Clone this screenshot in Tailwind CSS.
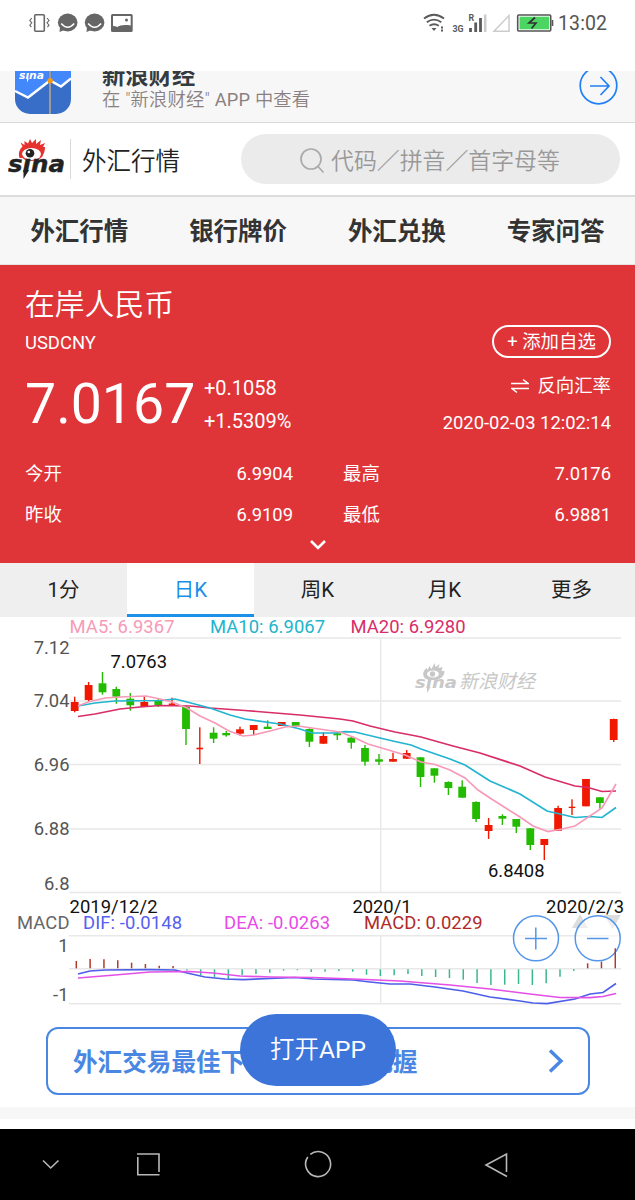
<!DOCTYPE html>
<html lang="zh-CN">
<head>
  <meta charset="UTF-8" />
  <meta name="viewport" content="width=device-width, initial-scale=1.0" />
  <title>外汇行情 - 在岸人民币</title>
  <script src="https://cdn.jsdelivr.net/npm/@tailwindcss/browser@4"></script>
</head>
<body class="w-[635px] h-[1200px] overflow-hidden bg-white font-[Roboto,'Noto_Sans_CJK_SC',sans-serif] text-[#333]">

  <!-- Status bar -->
  <div class="h-[71px] flex justify-between">
    <svg class="ml-7 mt-3 w-[110px] h-[22px]" viewBox="28 12 110 22" fill="none">
      <rect x="34.7" y="14.8" width="9.6" height="16.4" rx="1" stroke="#666" stroke-width="1.6" />
      <path d="M31.8 18l-2 2.5 2 2.3-2 2.4 1.6 2M47 18l2 2.5-2 2.3 2 2.4-1.6 2" stroke="#666" stroke-width="1.1" />
      <g fill="#666">
        <ellipse cx="67.7" cy="22.5" rx="9.8" ry="8.9" />
        <path d="M60 27l-.5 5 5-2z" />
        <ellipse cx="94.6" cy="22.5" rx="9.8" ry="8.9" />
        <path d="M87 27l-.5 5 5-2z" />
        <rect x="111" y="14" width="21.7" height="18" rx="1.5" />
      </g>
      <path d="M61.2 23.5q6.5 7.5 13 0M88.1 23.5q6.5 7.5 13 0" stroke="#fff" stroke-width="1.4" />
      <path d="M113 16h17.7v9.5c-7-1-11 0-13.5 1.5-1.5-.8-3-1-4.2-1z" fill="#fff" />
      <circle cx="126.5" cy="20" r="1.5" fill="#666" />
    </svg>
    <svg class="mr-6 mt-3 w-[190px] h-[24px]" viewBox="421 12 190 24" fill="none">
      <path d="M424 18.5q10-7.5 20 0M426.800 22.2q7.200-5.200 14.500 0M429.500 25.8q4.500-3.200 9.300 0" stroke="#5a5a5a" stroke-width="1.9" />
      <path d="M431.5 28h5l-2.500 3z" fill="#5a5a5a" />
      <path d="M442 26.500v2M442 29.500v2" stroke="#5a5a5a" stroke-width="2" />
      <text x="452.5" y="32" font-size="8.8" font-weight="700" fill="#5a5a5a">3G</text>
      <text x="468.5" y="21" font-size="8.8" font-weight="700" fill="#5a5a5a">R</text>
      <path d="M470.500 28v4M475.700 22.500v9.500M480.500 18v14" stroke="#5a5a5a" stroke-width="2.8" />
      <path d="M485.200 14.500v17.500" stroke="#ccc" stroke-width="2.6" />
      <path d="M509 15.500v15.700h-15z" stroke="#ccc" stroke-width="1.5" />
      <rect x="517.7" y="15" width="33" height="16" rx="1" stroke="#555" stroke-width="1.6" />
      <rect x="519.5" y="16.7" width="29.5" height="12.6" fill="#4bd663" />
      <path d="M552.500 20v6" stroke="#555" stroke-width="1.6" />
      <path d="M535 17.500l-6 5.500h7l-4.500 5.500" stroke="#333" stroke-width="1.7" />
      <text x="558" y="29.5" font-size="19.5" textLength="49" fill="#555">13:02</text>
    </svg>
  </div>

  <!-- App banner, scrolled partly out of view -->
  <div class="h-[52px] overflow-hidden bg-[#f7f7f7] border-b border-[#d9d9d9] flex items-start">
    <svg class="ml-[15px] w-14 h-[43px]" viewBox="15 71 56 43" fill="none">
      <path d="M15 71h56v28a15 15 0 0 1-15 15h-26a15 15 0 0 1-15-15z" fill="#386ec8" />
      <path d="M15 71h56v7l-10 8-11-6-22 17-13-6z" fill="#4388fa" />
      <path d="M15 91l13 6.500 22-17 11 6 10-8" stroke="#fff" stroke-width="2.4" />
      <path d="M50 71v43" stroke="#667" stroke-width="2.4" />
      <path d="M50 71v43" stroke="#ccc" stroke-width="1" />
      <circle cx="50.2" cy="80.7" r="2.7" fill="#f59a18" />
      <text x="19" y="79" font-size="11" font-weight="700" font-style="italic" font-family="DejaVu Sans" textLength="25" lengthAdjust="spacingAndGlyphs" fill="#fff">sına</text>
      <path d="M27 78.500h2l-2 4z" fill="#fff" />
    </svg>
    <div class="ml-[31px] -mt-[9px]">
      <div class="text-[23.3px] leading-[28px] font-bold text-[#333b40]">新浪财经</div>
      <div class="mt-[-2px] text-[18.3px] leading-[24px] font-[350] tracking-[.2px] text-[#8a8080]">在 "新浪财经" <span class="font-normal">APP</span> 中查看</div>
    </div>
    <svg class="ml-auto mr-[17px] w-10 h-[35px]" viewBox="578 71 40 35" fill="none" stroke="#2080f5" stroke-width="1.7">
      <circle cx="598.5" cy="85.5" r="18.3" />
      <path d="M590 86h19M600.500 77l8.500 9-8.500 9" />
    </svg>
  </div>

  <!-- Site header -->
  <header class="h-[74px] flex items-center border-b-2 border-[#dcdcdc]">
    <svg class="ml-2 w-[58px] h-[44px]" viewBox="8 138 58 44" fill="none">
      <path d="M19.500 159c-1.500-5 0-8.500 3-11.500l-2-4 4 2.500 0-4 3.500 2.500 2-4.500 2 4 4-4 0 5 5-4-1 5 5-2-2 4 2 0c0 4-1 7-3.500 10z" fill="#e6322f" />
      <ellipse cx="31.5" cy="155" rx="9.5" ry="6" fill="#fff" />
      <path d="M21.500 156q1.500 5 10 5.500 8-.500 11-5" stroke="#e6322f" stroke-width="1.2" />
      <circle cx="30" cy="154.2" r="4.300" fill="#222" />
      <circle cx="28.8" cy="153" r="1.3" fill="#fff" />
      <text x="8" y="172.500" font-size="22.5" font-weight="700" font-style="italic" font-family="DejaVu Sans" textLength="57" lengthAdjust="spacingAndGlyphs" stroke="#222" stroke-width=".4" fill="#222">sına</text>
      <path d="M23.500 171h5.500l-5.500 9z" fill="#222" />
    </svg>
    <div class="ml-1 w-px h-10 bg-[#d8d8d8]"></div>
    <h1 class="ml-[11px] mt-[5px] text-[24.5px] leading-8 font-[350] text-[#222]">外汇行情</h1>
    <div class="ml-auto mr-[15px] w-[379px] h-[50px] rounded-full bg-[#ebebeb] flex items-center pl-[58px] text-[#999]">
      <svg class="mt-1 w-[28px] h-[28px]" viewBox="0 0 28 28" fill="none" stroke="#aaa" stroke-width="1.7">
        <circle cx="12" cy="12" r="10" />
        <path d="M19 19.500l5.500 6" />
      </svg>
      <span class="ml-1 mt-[5px] text-[22.9px] leading-8 font-[350]">代码／拼音／首字母等</span>
    </div>
  </header>

  <!-- Navigation -->
  <nav class="h-[68px] pt-[3px] grid grid-cols-4 items-center text-center bg-[#f7f7f7] border-b border-[#e4e4e4] text-[24.5px] leading-8 font-bold text-[#333]">
    <a>外汇行情</a>
    <a>银行牌价</a>
    <a>外汇兑换</a>
    <a>专家问答</a>
  </nav>

  <!-- Quote panel -->
  <section class="h-[298px] bg-[#df3539] text-white px-6 pt-[21px] text-[18.4px]">
    <h2 class="ml-px text-[29.8px] leading-[38px] font-[350]">在岸人民币</h2>
    <div class="flex justify-between">
      <div>
        <div class="mt-[7px] ml-px text-[18.4px] leading-6">USDCNY</div>
        <div class="flex mt-[17px]">
          <div class="w-[179px] ml-px text-[55.4px] leading-[66px]">7.0167</div>
          <div class="text-[20px] leading-[33px]">
            <div>+0.1058</div>
            <div>+1.5309%</div>
          </div>
        </div>
      </div>
      <div class="flex flex-col items-end">
        <button class="mt-px w-[119px] h-[33px] border-2 border-white rounded-full text-[18.4px] leading-7">+ 添加自选</button>
        <div class="mt-[14px] h-7 flex items-center gap-2">
          <svg class="w-[18px] h-4" viewBox="0 0 18 16" fill="none" stroke="#fff" stroke-width="1.5">
            <path d="M0 5.500h17l-5-4M18 10.500h-17l5 4" />
          </svg>
          <span>反向汇率</span>
        </div>
        <div class="mt-[11px] leading-6">2020-02-03 12:02:14</div>
      </div>
    </div>
    <div class="mt-[15px] grid grid-cols-[269px_268px] gap-x-[50px] leading-[41px]">
      <div class="flex justify-between"><span class="ml-px">今开</span><span>6.9904</span></div>
      <div class="flex justify-between"><span>最高</span><span>7.0176</span></div>
      <div class="flex justify-between"><span class="ml-px">昨收</span><span>6.9109</span></div>
      <div class="flex justify-between"><span>最低</span><span>6.9881</span></div>
    </div>
    <svg class="mx-auto mt-1 w-4 h-[11px]" viewBox="0 0 16 11" fill="none" stroke="#fff" stroke-width="2.6">
      <path d="M1 2l7 7 7-7" />
    </svg>
  </section>

  <!-- Period tabs -->
  <div class="h-[54px] grid grid-cols-5 text-center bg-[#efefef] text-[20.5px] leading-[51px] text-[#222]">
    <div class="pt-[2px]">1分</div>
    <div class="pt-[2px] relative bg-white text-[#1a90e8]">日K<span class="absolute inset-x-0 bottom-0 h-[3px] bg-[#1a90e8]"></span></div>
    <div class="pt-[2px]">周K</div>
    <div class="pt-[2px]">月K</div>
    <div class="pt-[2px]">更多</div>
  </div>

  <!-- K-line and MACD charts -->
  <svg class="block w-[635px] h-[410px]" viewBox="0 617 635 410" fill="none" font-size="18.4">
    <path d="M69 638h552M69 701h552M69 764.5h552M69 829h552M69 892.5h552M380.7 638v254.5M69 935.7h552M69 968.7h552M69 1003.7h552M380.7 936v67.5" stroke="#e8e8e8" stroke-width="1.4" />

    <g fill="#c8c8c8">
      <path d="M423.5 676c-1-4 1-6 3-8l1 2 2-4 2 3 3-6 1 4 4-3-1 4 4-1-1 4 3 0c0 6-5 9-11 9s-9-1-10-4z" />
      <ellipse cx="433" cy="674" rx="6" ry="3.5" fill="#fff" />
      <circle cx="432.5" cy="674" r="2.7" />
      <text x="415" y="687.5" font-size="16.5" font-weight="700" font-style="italic" font-family="DejaVu Sans" textLength="42" lengthAdjust="spacingAndGlyphs">sına</text>
      <path d="M427 687h3.500l-3.500 6z" />
      <text x="459" y="687.5" font-size="19" font-style="italic">新浪财经</text>
    </g>

    <g id="candles"></g>
    <path d="M78 716.5L95 714L110 711L120 709L140 707L160 705.5L190 706L210 708L245 710.5L300 715L340 719L353 721L370 726L395 732L411 735L421 737L453 746L480 753L520 766L545 777L575 786L588 787.5L602 791.5L616 791" stroke="#d82d68" stroke-width="1.7" />
    <path d="M78 706L95 703L115 701L160 700.5L175 699L187 702L210 708L230 715L245 719L280 724L300 729L312 733L335 733L345 731.7L355 732L380 738L395 741.5L411 745L421 749L450 759L465 765L490 781L520 794L547 811L575 817.5L590 816.5L602 817.5L616 807.5" stroke="#22b4d0" stroke-width="1.7" />
    <path d="M78 706L88 702L105 698L120 697L146 696L160 699L172 702L187 708L200 716L215 723L229 731L243 736L254 735L270 731L285 727L298 726L312 728L340 732L353 737L368 744L385 749L405 755L421 762L435 764.5L450 770L465 778L478 790L490 798L520 817L533 826L548 831.5L562 829L575 826L602 808L616 784" stroke="#f79ab8" stroke-width="1.7" />

    <text x="69.5" y="632.5" textLength="105" fill="#f79ab8">MA5: 6.9367</text>
    <text x="210" y="632.5" textLength="115" fill="#22b4cc">MA10: 6.9067</text>
    <text x="350.5" y="632.5" textLength="115" fill="#d82d68">MA20: 6.9280</text>

    <g fill="#555" text-anchor="end">
      <text x="69.5" y="653.5">7.12</text>
      <text x="69.5" y="706.5">7.04</text>
      <text x="69.5" y="771">6.96</text>
      <text x="69.5" y="835">6.88</text>
      <text x="69.5" y="890">6.8</text>
      <text x="68.5" y="951.5">1</text>
      <text x="68.5" y="1001">-1</text>
    </g>
    <g fill="#111">
      <text x="110.5" y="668">7.0763</text>
      <text x="488" y="877">6.8408</text>
      <text x="69.5" y="913" textLength="88">2019/12/2</text>
      <text x="352.5" y="913" textLength="59">2020/1</text>
      <text x="546" y="913" textLength="78">2020/2/3</text>
    </g>

    <text x="17" y="929" textLength="52.5" fill="#666">MACD</text>
    <text x="83" y="929" textLength="99" fill="#5560f0">DIF: -0.0148</text>
    <text x="224" y="929" textLength="106" fill="#e84ae8">DEA: -0.0263</text>
    <text x="364" y="929" textLength="118.5" fill="#b02a2a">MACD: 0.0229</text>

    <path d="M572 928l8-14 8 14zM604 915h17l-8.500 14z" fill="#ddd" />
    <g stroke="#5596ea" stroke-width="1.5">
      <circle cx="536" cy="938.3" r="22.5" fill="#fff" fill-opacity=".5" />
      <circle cx="597.7" cy="938.3" r="22.5" fill="#fff" fill-opacity=".5" />
      <path d="M525 938.500h22M535.800 927.500v22M587 938.500h21.500" />
    </g>

    <g id="macd"></g>
    <path d="M78 974L90 971L105 970L150 969.7L175 970L187 973L205 977L225 979L243 979.7L270 978.5L295 977.5L313 979L353 980L370 982L390 984L410 984L435 987L463 991L490 997L520 1001L533 1003L547 1003.7L575 999L590 994L603 992.5L616 983.5" stroke="#4d5fe8" stroke-width="1.7" />
    <path d="M78 978L115 975L150 972L190 971.5L213 973L240 976L270 977L313 977.5L353 979L400 981L450 985L490 989L530 994L560 997.5L590 997.7L603 996.5L616 993.5" stroke="#e44fe6" stroke-width="1.7" />
  </svg>

  <!-- Promo link with the floating "open app" button -->
  <div class="relative h-20 px-[46px]">
    <a class="w-[544px] h-[68px] border-2 border-[#4a87e2] rounded-xl flex items-center justify-between pl-[25px] pr-6 text-[24.6px] font-bold text-[#4a87e2]">
      <span class="mt-[5px]">外汇交易最佳下单时机轻松把握</span>
      <svg class="w-4 h-6" viewBox="0 0 16 24" fill="none" stroke="#4a87e2" stroke-width="3.4">
        <path d="M2 1.500l11 10.500-11 10.500" />
      </svg>
    </a>
    <button class="absolute left-[240px] -top-[13px] w-[156px] h-[72px] rounded-full bg-[#3d74d9] text-white text-[24.5px] font-[350]">打开<span class="font-normal">APP</span></button>
  </div>
  <div class="h-3 bg-[#f7f7f7]"></div>
  <div class="h-[10px] bg-white"></div>

  <!-- System navigation bar -->
  <div class="h-[71px] bg-black">
    <svg class="w-[635px] h-[71px]" viewBox="0 1129 635 71" fill="none" stroke="#b8b8b8" stroke-width="1.6">
      <path d="M43 1160.500l7.700 7.500 7.800-7.500" />
      <path d="M137 1154h22v18M159.500 1174.700h-21.700v-17.700" />
      <path d="M307.800 1157a12.500 12.500 0 1 0 2.500-2.700" />
      <path d="M506.500 1172v-18l-20.500 11 21 11.500" />
    </svg>
  </div>

  <script>
// x, high, low, body top, body bottom, up (1) or down (0)
const candles = [
  [74.7, 696.7, 712.3, 702, 711, 1], [88.6, 682, 701, 685, 700, 1], [102.5, 672, 694.7, 683.3, 692.3, 0],
  [116.3, 686.7, 703.7, 689, 696.7, 0], [130.3, 693, 710.7, 698.7, 705.3, 0], [144.3, 697, 707, 702, 707, 1],
  [158.3, 698.7, 707, 700, 705.3, 0], [172, 697.7, 705.3, 703.5, 705, 1], [186, 706, 745, 707, 729, 0],
  [199.8, 727.3, 764, 747.7, 749.3, 1], [213.6, 727.3, 743, 732.7, 738.7, 0], [226.2, 731, 736.7, 733, 735.3, 0],
  [240, 726.7, 735.7, 729.3, 733.7, 1], [253.7, 725, 735, 725, 730, 1], [267.6, 720.3, 729, 726.7, 729, 0],
  [281.7, 722, 726, 722, 726, 1], [295.7, 722, 726.7, 722, 726.7, 0], [309.4, 728.3, 747, 729, 741.7, 0],
  [323.4, 732.3, 744, 736, 743.7, 1], [337.3, 732.7, 740, 733.3, 735.3, 0], [351.3, 737, 748.7, 737.7, 742.7, 0],
  [365, 745, 765.7, 748, 761.7, 0], [379, 754, 765, 759.3, 761.7, 0], [393, 752.7, 761.7, 759, 761.7, 1],
  [406.7, 750, 759, 753, 758.7, 1], [420.5, 757, 787, 757.3, 777, 0], [434.4, 768.3, 782.7, 768.3, 775.7, 0],
  [448.4, 781.3, 795, 782, 788, 0], [462.2, 780.3, 797.7, 786.7, 797.7, 0], [476.1, 801.3, 822, 802, 819, 0],
  [488.6, 818, 839, 825, 831, 1], [502.4, 814.3, 825, 816, 818.7, 0], [516.3, 819, 833, 819, 826.7, 0],
  [530.3, 828, 850, 828.3, 845, 0], [544.3, 839, 860, 839, 845, 1], [558.1, 805.7, 831, 808, 830.7, 1],
  [572, 799.3, 815, 806.7, 808, 1], [586, 779, 806.3, 779, 806.3, 1], [599.9, 797, 808.7, 797.3, 803, 0],
  [613.7, 718.7, 742, 719, 740, 1]
];
document.getElementById('candles').innerHTML = candles.map(([x, hi, lo, top, bottom, up]) => {
  const w = bottom - top < 2 ? 6.6 : 7.8;
  const fill = up ? '#f01800' : '#22bb00';
  return `<rect x="${x - 0.7}" y="${hi}" width="1.4" height="${lo - hi}" fill="${fill}" />
    <rect x="${x - w / 2}" y="${top}" width="${w}" height="${bottom - top}" fill="${fill}" />`;
}).join('');

// End of each MACD bar, measured from the zero line
const bars = [
  961, 959, 959.3, 960.3, 962.7, 964, 965.7, 966, 970.5, 975.3, 977.3, 979, 975.3, 974, 972.7, 970.7, 970.3, 972, 971.7, 971,
  971.7, 974.7, 976, 975.3, 974, 976, 977, 978, 979.7, 983, 985, 984.7, 984, 985, 983.3, 976.7, 971, 963.3, 961.7, 948.3
];
document.getElementById('macd').innerHTML = bars.map((y, i) => {
  const x = 76.3 + i * 13.82;
  return y < 968
    ? `<path d="M${x} ${y}V968.3" stroke="#b03a2a" stroke-width="1.5" />`
    : `<path d="M${x} 969.3V${y}" stroke="#3ab890" stroke-width="1.5" />`;
}).join('');
  </script>
</body>
</html>
